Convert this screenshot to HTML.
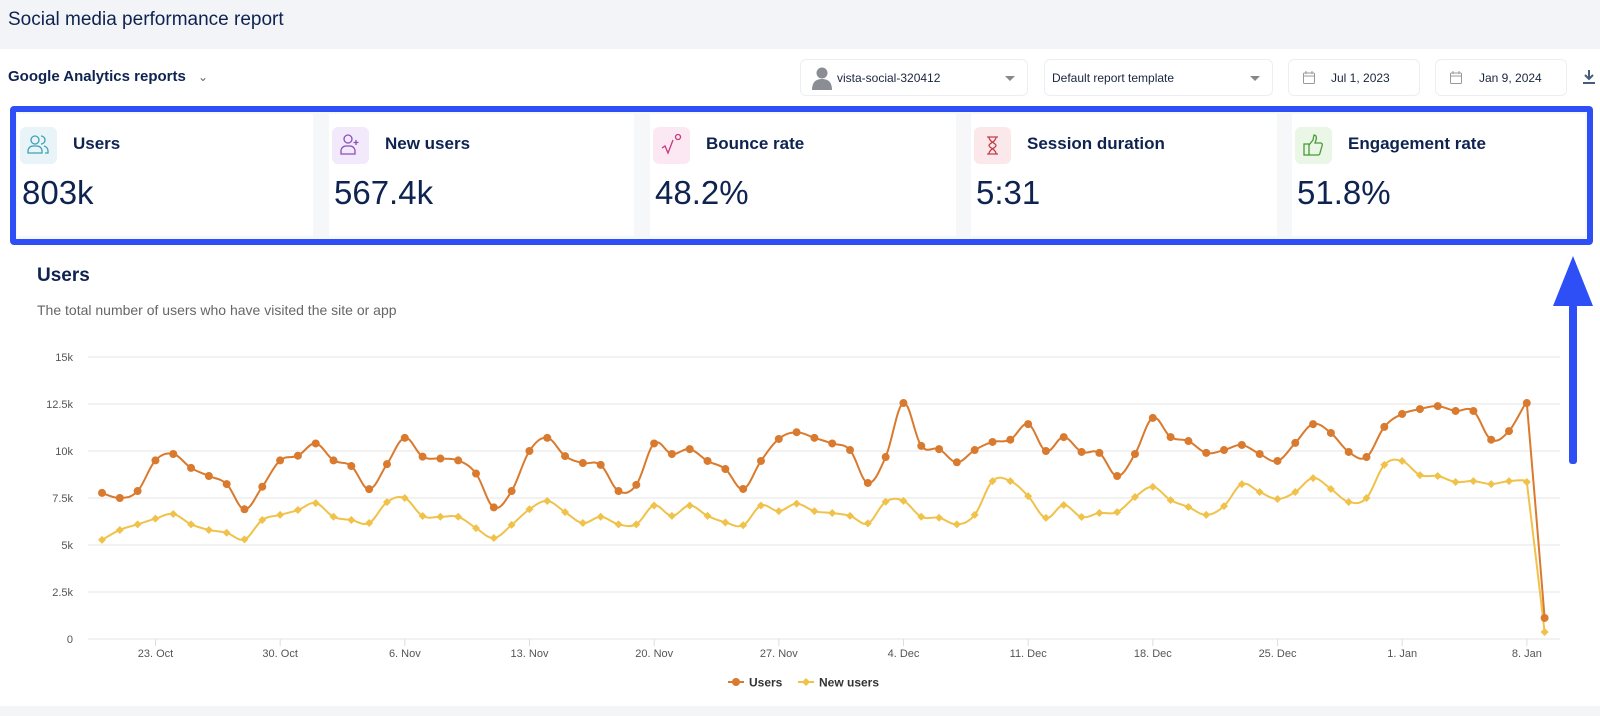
<!DOCTYPE html>
<html><head><meta charset="utf-8">
<style>
*{margin:0;padding:0;box-sizing:border-box}
body{width:1600px;height:716px;overflow:hidden;background:#fff;font-family:"Liberation Sans",sans-serif;color:#0e2350;position:relative}
.abs{position:absolute}
.hdr{left:0;top:0;width:1600px;height:49px;background:#f3f4f8}
.hdr span{position:absolute;left:8px;top:9px;font-size:19px;color:#0e2350}
.ga{left:8px;top:68px;font-size:15px;font-weight:bold;color:#0e2350}
.box{border:1px solid #eceef2;border-radius:6px;height:37px;top:59px;background:#fff;font-size:12px;color:#1a2540}
.box .t{position:absolute;top:11px}
.caret{position:absolute;top:16px;width:0;height:0;border-left:5px solid transparent;border-right:5px solid transparent;border-top:5px solid #888}
.frame{left:10px;top:106px;width:1583px;height:139px;border:6px solid #2d4ff5;border-radius:4px;background:#f6f7f9}
.card{top:114px;height:122px;background:#fff}
.ico{position:absolute;left:3px;top:13px;width:37px;height:37px;border-radius:6px}
.lab{position:absolute;left:56px;top:20px;font-size:17px;font-weight:bold;color:#0e2350}
.val{position:absolute;left:5px;top:60px;font-size:33px;color:#0e2350}
.sect{left:0;top:706px;width:1600px;height:10px;background:#f4f5f7}
</style></head><body>
<div class="abs hdr"><span>Social media performance report</span></div>
<div class="abs ga">Google Analytics reports <span style="font-weight:normal;color:#666;font-size:12px;margin-left:8px">&#8964;</span></div>

<div class="abs box" style="left:800px;width:228px">
 <svg class="abs" style="left:10px;top:6px" width="22" height="24"><circle cx="11" cy="7" r="5.5" fill="#8a8d93"/><path d="M1 24 Q1 13 11 13 Q21 13 21 24Z" fill="#8a8d93"/></svg>
 <span class="t" style="left:36px">vista-social-320412</span><div class="caret" style="left:204px"></div></div>
<div class="abs box" style="left:1044px;width:229px"><span class="t" style="left:7px">Default report template</span><div class="caret" style="left:205px"></div></div>
<div class="abs box" style="left:1288px;width:132px">
 <svg class="abs" style="left:14px;top:11px" width="12" height="13"><rect x="0.5" y="2" width="11" height="10.5" rx="1" fill="none" stroke="#999"/><path d="M3 0v3M9 0v3M1 5h10" stroke="#999"/></svg>
 <span class="t" style="left:42px">Jul 1, 2023</span></div>
<div class="abs box" style="left:1435px;width:132px">
 <svg class="abs" style="left:14px;top:11px" width="12" height="13"><rect x="0.5" y="2" width="11" height="10.5" rx="1" fill="none" stroke="#999"/><path d="M3 0v3M9 0v3M1 5h10" stroke="#999"/></svg>
 <span class="t" style="left:43px">Jan 9, 2024</span></div>
<svg class="abs" style="left:1582px;top:69px" width="14" height="16"><path d="M7 1v9M3 6l4 4 4-4" stroke="#4a5a7a" stroke-width="2" fill="none"/><path d="M1 14h12" stroke="#4a5a7a" stroke-width="2"/></svg>

<div class="abs frame"></div>
<div class="abs card" style="left:17px;width:296px">
 <div class="ico" style="background:#e8f4f7"><svg width="37" height="37"><g fill="none" stroke="#3fa0b8" stroke-width="1.3"><circle cx="15" cy="13" r="4"/><path d="M8 26v-2a5 5 0 0 1 5-5h4a5 5 0 0 1 5 5v2z"/><path d="M21 9a4 4 0 0 1 0 8M24 19a5 5 0 0 1 4 5v2h-3"/></g></svg></div>
 <div class="lab">Users</div><div class="val">803k</div></div>
<div class="abs card" style="left:329px;width:305px">
 <div class="ico" style="background:#f2eafa"><svg width="37" height="37"><g fill="none" stroke="#8c4fb8" stroke-width="1.3"><circle cx="16" cy="12" r="4"/><path d="M9 27v-3a5 5 0 0 1 5-5h4a5 5 0 0 1 5 5v3z"/><path d="M24 13v5M21.5 15.5h5"/></g></svg></div>
 <div class="lab">New users</div><div class="val">567.4k</div></div>
<div class="abs card" style="left:650px;width:306px">
 <div class="ico" style="background:#fce8f2"><svg width="37" height="37"><g fill="none" stroke="#c23a7c" stroke-width="1.3"><path d="M9 21l3-2 3 7 5-13"/><circle cx="25" cy="10" r="2.5"/></g></svg></div>
 <div class="lab">Bounce rate</div><div class="val">48.2%</div></div>
<div class="abs card" style="left:971px;width:306px">
 <div class="ico" style="background:#fbe8ea"><svg width="37" height="37"><g fill="none" stroke="#c0404a" stroke-width="1.3"><path d="M13 10h11M13 27h11M15 10c0 5 7 6 7 8.5S15 22 15 27M22 10c0 5-7 6-7 8.5S22 22 22 27"/></g></svg></div>
 <div class="lab">Session duration</div><div class="val">5:31</div></div>
<div class="abs card" style="left:1292px;width:293px">
 <div class="ico" style="background:#eaf6e6"><svg width="37" height="37"><g fill="none" stroke="#4a9a3a" stroke-width="1.3"><rect x="9" y="17" width="5" height="11"/><path d="M14 18l4-5 1-5c2 0 3 2 2 5l-1 3h6a2 2 0 0 1 1 3l-2 7a2 2 0 0 1-2 2h-9"/></g></svg></div>
 <div class="lab">Engagement rate</div><div class="val">51.8%</div></div>

<div class="abs" style="left:37px;top:265px;font-size:19px;font-weight:bold;color:#0e2350">Users</div>
<div class="abs" style="left:37px;top:302px;font-size:14px;color:#666">The total number of users who have visited the site or app</div>

<svg id="ch" class="abs" style="left:0;top:0" width="1600" height="716"></svg>

<div class="abs" style="left:1569px;top:304px;width:8px;height:160px;background:#2d4ff5;border-radius:3px"></div>
<svg class="abs" style="left:1553px;top:256px" width="40" height="50"><path d="M20 0L40 50H0Z" fill="#2d4ff5"/></svg>

<div class="abs sect"></div>
<script>
var U=[7.77,7.5,7.87,9.5,9.84,9.1,8.67,8.24,6.9,8.1,9.5,9.75,10.4,9.5,9.2,7.97,9.3,10.7,9.7,9.6,9.5,8.8,7.0,7.87,10.0,10.7,
9.73,9.36,9.26,7.87,8.2,10.4,9.84,10.1,9.47,9.04,7.98,9.47,10.64,11.0,10.7,10.4,10.05,8.3,9.68,12.55,10.27,10.1,9.4,10.05,10.48,10.6,11.43,
10.0,10.74,9.95,9.9,8.67,9.84,11.76,10.74,10.53,9.9,10.05,10.32,9.84,9.47,10.43,11.43,10.96,9.95,9.68,11.28,11.97,12.23,12.39,12.13,12.13,10.6,11.06,12.55,1.12];
var N=[5.27,5.8,6.1,6.4,6.65,6.1,5.8,5.65,5.3,6.33,6.6,6.86,7.23,6.5,6.33,6.17,7.28,7.5,6.54,6.5,6.5,5.9,5.37,6.07,6.9,7.34,
6.75,6.17,6.5,6.1,6.1,7.1,6.55,7.1,6.55,6.2,6.05,7.1,6.8,7.2,6.8,6.7,6.55,6.15,7.3,7.35,6.5,6.45,6.1,6.6,8.4,8.4,7.6,
6.44,7.13,6.49,6.7,6.75,7.55,8.09,7.39,7.02,6.6,7.07,8.24,7.82,7.45,7.82,8.56,7.98,7.29,7.5,9.26,9.47,8.72,8.67,8.35,8.4,8.24,8.4,8.35,0.37];
var s='';
var labs=['15k','12.5k','10k','7.5k','5k','2.5k','0'];
for(var i=0;i<7;i++){var y=357+i*47;s+='<line x1="88" x2="1560" y1="'+y+'" y2="'+y+'" stroke="#e6e6e6"/>';
s+='<text x="73" y="'+(y+4)+'" text-anchor="end" font-size="11" fill="#555" font-family="Liberation Sans">'+labs[i]+'</text>';}
var xl=['23. Oct','30. Oct','6. Nov','13. Nov','20. Nov','27. Nov','4. Dec','11. Dec','18. Dec','25. Dec','1. Jan','8. Jan'];
for(var k=0;k<12;k++){var x=155.5+k*124.67;s+='<line x1="'+x+'" x2="'+x+'" y1="639" y2="646" stroke="#ddd"/><text x="'+x+'" y="657" text-anchor="middle" font-size="11" fill="#555" font-family="Liberation Sans">'+xl[k]+'</text>';}
function px(i){return 102+i*17.81}function py(v){return 639-v*18.8}
function path(a){var p=a.map(function(v,i){return [px(i),py(v)]});var d='M'+p[0][0]+' '+p[0][1];
for(var i=0;i<p.length-1;i++){var p0=p[i-1]||p[i],p1=p[i],p2=p[i+1],p3=p[i+2]||p2;var t1=0.18,t2=0.18;
if(i>=p.length-3){t2=(i==p.length-3)?0.02:0.05;} if(i==p.length-2)t1=0.02;
d+=' C'+(p1[0]+(p2[0]-p0[0])*t1)+' '+(p1[1]+(p2[1]-p0[1])*t1)+' '+(p2[0]-(p3[0]-p1[0])*t2)+' '+(p2[1]-(p3[1]-p1[1])*t2)+' '+p2[0]+' '+p2[1];}return d;}
s+='<path d="'+path(N)+'" fill="none" stroke="#f0c24a" stroke-width="2"/>';
s+='<path d="'+path(U)+'" fill="none" stroke="#d97a2e" stroke-width="2"/>';
N.forEach(function(v,i){var x=px(i),y=py(v);s+='<path d="M'+x+' '+(y-4)+'L'+(x+4)+' '+y+'L'+x+' '+(y+4)+'L'+(x-4)+' '+y+'Z" fill="#f0c24a"/>';});
U.forEach(function(v,i){s+='<circle cx="'+px(i)+'" cy="'+py(v)+'" r="4" fill="#d97a2e"/>';});
s+='<line x1="728" x2="744" y1="682" y2="682" stroke="#d97a2e" stroke-width="2"/><circle cx="736" cy="682" r="4" fill="#d97a2e"/><text x="749" y="686.5" font-size="12" font-weight="bold" fill="#333" font-family="Liberation Sans">Users</text>';
s+='<line x1="798" x2="814" y1="682" y2="682" stroke="#f0c24a" stroke-width="2"/><path d="M806 678L810 682L806 686L802 682Z" fill="#f0c24a"/><text x="819" y="686.5" font-size="12" font-weight="bold" fill="#333" font-family="Liberation Sans">New users</text>';
document.getElementById('ch').innerHTML=s;
</script>
</body></html>
